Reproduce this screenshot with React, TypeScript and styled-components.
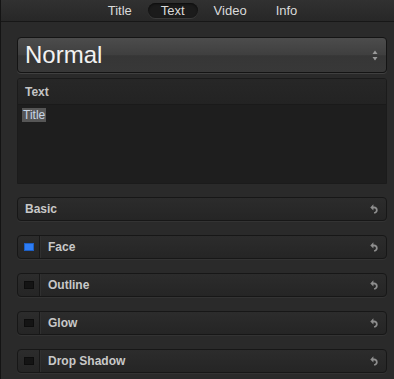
import * as React from "react";
import styled, { createGlobalStyle } from "styled-components";

const GlobalStyle = createGlobalStyle`
  html, body {
    margin: 0;
    padding: 0;
    background: #2a2a2a;
  }
  body {
    font-family: "Liberation Sans", Arial, sans-serif;
  }
`;

const Panel = styled.div`
  width: 394px;
  height: 379px;
  box-sizing: border-box;
  background: #2a2a2a;
  border-left: 1px solid #141414;
  overflow: hidden;
`;

const TabBar = styled.div`
  height: 22px;
  box-sizing: border-box;
  display: flex;
  justify-content: center;
  align-items: center;
  gap: 3px;
  padding-left: 10px;
  background: linear-gradient(#313131, #272727);
  border-bottom: 1px solid #171717;
`;

const Tab = styled.div<{ $active?: boolean }>`
  height: 15px;
  line-height: 15px;
  padding: 0 13px;
  border-radius: 8px;
  font-size: 13px;
  color: #dadada;
  background: ${(p) => (p.$active ? "#1b1b1b" : "transparent")};
  box-shadow: ${(p) =>
    p.$active ? "inset 0 1px 2px #0c0c0c, 0 1px 0 #3a3a3a" : "none"};
`;

const Content = styled.div`
  display: flex;
  flex-direction: column;
  padding: 15px 7px 0 16px;
`;

const Popup = styled.div`
  height: 36px;
  box-sizing: border-box;
  display: flex;
  align-items: center;
  justify-content: space-between;
  padding: 0 8px 0 7px;
  border: 1px solid #141414;
  border-radius: 4px;
  background: linear-gradient(#4c4c4c, #3f3f3f 50%, #363636 52%, #383838);
  box-shadow: 0 1px 0 #404040;
`;

const PopupLabel = styled.span`
  font-size: 24px;
  color: #f2f2f2;
`;

const TextSection = styled.div`
  margin-top: 5px;
  display: flex;
  flex-direction: column;
  border: 1px solid #1b1b1b;
  border-radius: 3px 3px 0 0;
  overflow: hidden;
`;

const SectionHeader = styled.div`
  height: 25px;
  display: flex;
  align-items: center;
  padding-left: 7px;
  font-size: 12px;
  font-weight: bold;
  color: #c4c4c4;
  background: linear-gradient(#272727, #232323);
  border-bottom: 1px solid #1a1a1a;
`;

const TextArea = styled.div`
  height: 78px;
  background: #1e1e1e;
  padding-left: 4px;
`;

const Selected = styled.span`
  display: inline-block;
  height: 14px;
  line-height: 14px;
  padding: 0 1px;
  font-size: 12px;
  color: #c9d6e6;
  background: #565656;
`;

const Rows = styled.div`
  margin-top: 13px;
  display: flex;
  flex-direction: column;
  gap: 14px;
`;

const Row = styled.div`
  height: 24px;
  box-sizing: border-box;
  display: flex;
  align-items: stretch;
  border: 1px solid #171717;
  border-radius: 4px;
  background: linear-gradient(#2c2c2c, #252525);
  box-shadow: 0 1px 0 #333;
`;

const CheckCell = styled.div`
  width: 21px;
  display: flex;
  align-items: center;
  justify-content: center;
  border-right: 1px solid #181818;
  box-shadow: 1px 0 0 #303030;
`;

const Check = styled.div<{ $on?: boolean }>`
  width: 10px;
  height: 8px;
  margin-left: 1px;
  box-sizing: border-box;
  background: ${(p) => (p.$on ? "#2e7df5" : "#141414")};
  border: 1px solid ${(p) => (p.$on ? "#1d5fc4" : "#0d0d0d")};
`;

const RowLabel = styled.div<{ $indent: number }>`
  flex: 1;
  display: flex;
  align-items: center;
  padding-left: ${(p) => p.$indent}px;
  font-size: 12px;
  font-weight: bold;
  color: #c8c8c8;
`;

const Revert = styled.div`
  width: 16px;
  display: flex;
  align-items: center;
`;

const Steppers = () => (
  <svg width="6" height="11" viewBox="0 0 6 11">
    <path d="M3 0.5 L5.5 4 L0.5 4 Z" fill="#9a9a9a" />
    <path d="M3 10.5 L5.5 7 L0.5 7 Z" fill="#9a9a9a" />
  </svg>
);

const RevertIcon = () => (
  <svg width="8" height="10" viewBox="0 0 8 10">
    <path
      d="M3.4 0.3 L0.3 3.4 L3.4 6.4 L3.4 4.6 L4.2 4.6 C5.3 4.6 5.9 5.3 5.9 6.3 C5.9 7.3 5.1 8 3.9 8.3 L4.4 9.7 C6.4 9.3 7.7 8.1 7.7 6.2 C7.7 4 6.1 2.6 4.2 2.6 L3.4 2.6 Z"
      fill="#8e8e8e"
    />
  </svg>
);

const effects = [
  { name: "Face", on: true },
  { name: "Outline", on: false },
  { name: "Glow", on: false },
  { name: "Drop Shadow", on: false },
];

export default function App() {
  return (
    <Panel>
      <GlobalStyle />
      <TabBar>
        <Tab>Title</Tab>
        <Tab $active>Text</Tab>
        <Tab>Video</Tab>
        <Tab>Info</Tab>
      </TabBar>
      <Content>
        <Popup>
          <PopupLabel>Normal</PopupLabel>
          <Steppers />
        </Popup>
        <TextSection>
          <SectionHeader>Text</SectionHeader>
          <TextArea>
            <Selected>Title</Selected>
          </TextArea>
        </TextSection>
        <Rows>
          <Row>
            <RowLabel $indent={7}>Basic</RowLabel>
            <Revert>
              <RevertIcon />
            </Revert>
          </Row>
          {effects.map((fx) => (
            <Row key={fx.name}>
              <CheckCell>
                <Check $on={fx.on} />
              </CheckCell>
              <RowLabel $indent={8}>{fx.name}</RowLabel>
              <Revert>
                <RevertIcon />
              </Revert>
            </Row>
          ))}
        </Rows>
      </Content>
    </Panel>
  );
}
